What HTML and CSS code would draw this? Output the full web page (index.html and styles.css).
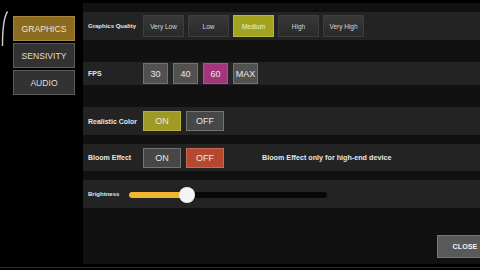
FILE: index.html
```html
<!DOCTYPE html>
<html lang="en">
<head>
    <meta charset="UTF-8">
    <meta name="viewport" content="width=device-width, initial-scale=1.0">
    <title>Settings</title>
    <link rel="stylesheet" href="styles.css">
</head>
<body>
    <div class="screen">
        <aside class="sidebar">
            <svg class="edge" width="8" height="36" viewBox="0 0 8 36">
                <path d="M6.5 0.5 Q1.5 8 1.5 35" fill="none" stroke="#cfcfcf" stroke-width="1.4"/>
            </svg>
            <nav class="tabs">
                <button class="tab active">GRAPHICS</button>
                <button class="tab">SENSIVITY</button>
                <button class="tab">AUDIO</button>
            </nav>
        </aside>

        <main class="panel">
            <div class="row row-quality">
                <span class="label small">Graphics Quality</span>
                <div class="options">
                    <button class="opt dark">Very Low</button>
                    <button class="opt dark">Low</button>
                    <button class="opt dark olive">Medium</button>
                    <button class="opt dark">High</button>
                    <button class="opt dark">Very High</button>
                </div>
            </div>

            <div class="row row-fps">
                <span class="label">FPS</span>
                <div class="options">
                    <button class="opt fps">30</button>
                    <button class="opt fps">40</button>
                    <button class="opt fps magenta">60</button>
                    <button class="opt fps">MAX</button>
                </div>
            </div>

            <div class="row row-toggle">
                <span class="label">Realistic Color</span>
                <div class="options">
                    <button class="opt toggle yellow">ON</button>
                    <button class="opt toggle">OFF</button>
                </div>
            </div>

            <div class="row row-bloom">
                <span class="label">Bloom Effect</span>
                <div class="options">
                    <button class="opt toggle">ON</button>
                    <button class="opt toggle red">OFF</button>
                </div>
                <span class="note">Bloom Effect only for high-end device</span>
            </div>

            <div class="row row-bright">
                <span class="label small slim">Brightness</span>
                <div class="slider">
                    <div class="fill" style="width: 58px"></div>
                    <div class="knob"></div>
                </div>
            </div>

            <div class="footer">
                <button class="close">CLOSE</button>
            </div>
        </main>
    </div>
</body>
</html>
```

FILE: styles.css
```css
body {
    margin: 0;
    background-color: #000;
    font-family: "Liberation Sans", Arial, sans-serif;
    color: #e6e6e6;
    overflow: hidden;
}

button {
    font-family: inherit;
    padding: 0;
    cursor: pointer;
}

.screen {
    display: flex;
    width: 480px;
    height: 267px;
    border-bottom: 1px solid #2c2c2c;
}

.sidebar {
    width: 83px;
    display: flex;
    align-items: flex-start;
    padding-left: 1px;
    box-sizing: border-box;
}

.edge {
    margin-top: 11px;
    margin-right: 4px;
}

.tabs {
    display: flex;
    flex-direction: column;
    gap: 2px;
    margin-top: 16px;
}

.tab {
    width: 62px;
    height: 25px;
    background-color: #323232;
    border: 1px solid #5c5c5c;
    color: #dedede;
    font-size: 8.6px;
}

.tab.active {
    background-color: #8b6b1f;
    border-color: #a6863a;
    color: #efe6d2;
}

.panel {
    flex: 1;
    margin-top: 3px;
    height: 261px;
    background-color: #111;
    padding-top: 9px;
    box-sizing: border-box;
    display: flex;
    flex-direction: column;
}

.row {
    display: flex;
    align-items: center;
    background-color: #232323;
}

.label {
    width: 60px;
    padding-left: 5px;
    box-sizing: border-box;
    font-size: 7px;
    font-weight: bold;
    flex-shrink: 0;
}

.label.small {
    font-size: 6px;
}

.label.slim {
    width: 46px;
}

.options {
    display: flex;
    gap: 5px;
}

.opt {
    color: #e8e8e8;
}

.row-quality {
    height: 28px;
}

.row-quality .options {
    gap: 4px;
}

.opt.dark {
    width: 41px;
    height: 22px;
    font-size: 6.5px;
    background: linear-gradient(#383838, #2a2a2a);
    border: 1px solid #3e3e3e;
    color: #d8d8d8;
}

.opt.dark.olive {
    background: #a3a321;
    border-color: #b8b83a;
    color: #f2f2d0;
}

.row-fps {
    margin-top: 22px;
    height: 23px;
}

.opt.fps {
    width: 25px;
    height: 21px;
    font-size: 9px;
    background-color: #515151;
    border: 1px solid #727272;
}

.opt.fps.magenta {
    background-color: #a3357c;
    border-color: #b84d92;
}

.row-toggle {
    margin-top: 22px;
    height: 28px;
}

.row-bloom {
    margin-top: 9px;
    height: 27px;
}

.opt.toggle {
    width: 38px;
    height: 20px;
    font-size: 9px;
    background-color: #474747;
    border: 1px solid #737373;
}

.opt.toggle.yellow {
    background-color: #9f9a25;
    border-color: #b6b040;
}

.opt.toggle.red {
    background-color: #b5482f;
    border-color: #c96a52;
}

.note {
    margin-left: 38px;
    font-size: 7.2px;
    font-weight: bold;
}

.row-bright {
    margin-top: 9px;
    height: 28px;
}

.slider {
    position: relative;
    width: 198px;
    height: 6px;
    border-radius: 3px;
    background-color: #080808;
    margin-top: 2px;
}

.fill {
    height: 100%;
    border-radius: 3px 0 0 3px;
    background-color: #f1b52f;
}

.knob {
    position: absolute;
    left: 50px;
    top: -5px;
    width: 16px;
    height: 16px;
    border-radius: 50%;
    background-color: #f4f4f6;
}

.footer {
    margin-top: auto;
    margin-bottom: 6px;
    display: flex;
    justify-content: flex-end;
}

.close {
    width: 43px;
    height: 23px;
    padding-left: 12px;
    background-color: #595959;
    border: 1px solid #787878;
    border-right: none;
    color: #f0f0f0;
    font-size: 7.2px;
    font-weight: bold;
}
```
